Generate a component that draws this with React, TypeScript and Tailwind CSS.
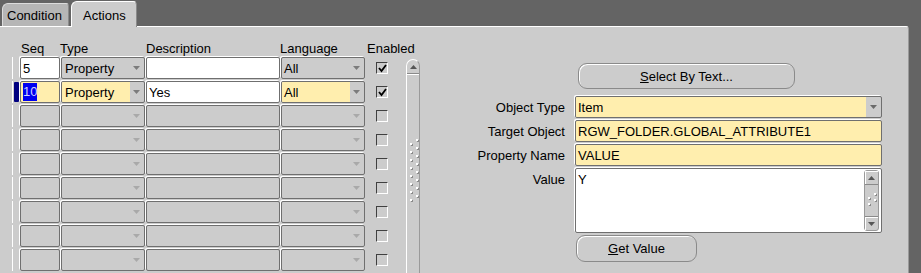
import React from "react";

const FONT = "font-['Liberation_Sans',Arial,Helvetica,sans-serif]";

function Arrow({ color = "#7c7c7c" }: { color?: string }) {
  return (
    <svg width="7" height="4" viewBox="0 0 7 4">
      <polygon points="0,0 7,0 3.5,4" fill={color} />
    </svg>
  );
}

function UpArrow({ color = "#404040" }: { color?: string }) {
  return (
    <svg width="7" height="4" viewBox="0 0 7 4">
      <polygon points="0,4 7,4 3.5,0" fill={color} />
    </svg>
  );
}

function Check({ checked }: { checked: boolean }) {
  return (
    <div className="w-[12px] h-[12px] border-t border-l border-t-[#404040] border-l-[#404040] border-b border-r border-b-white border-r-white flex items-center justify-center">
      {checked && (
        <svg width="9" height="9" viewBox="0 0 9 9">
          <polyline points="1,4 3.5,7 8,1" fill="none" stroke="#000" strokeWidth="1.8" />
        </svg>
      )}
    </div>
  );
}

const fieldBase =
  "h-[22px] border border-[#6f6f6f] rounded-[2px] shadow-[-1px_-1px_0_#ffffff] overflow-hidden flex items-center";

type Row = {
  seq: string;
  seqBg: string;
  seqSel?: boolean;
  type: string;
  typeBg: string;
  desc: string;
  descBg: string;
  lang: string;
  langBg: string;
  checked: boolean;
  current: boolean;
  active: boolean;
};

const rows: Row[] = [
  {
    seq: "5",
    seqBg: "bg-white",
    type: "Property",
    typeBg: "bg-transparent",
    desc: "",
    descBg: "bg-white",
    lang: "All",
    langBg: "bg-transparent",
    checked: true,
    current: false,
    active: true,
  },
  {
    seq: "10",
    seqBg: "bg-[#ffeeae]",
    seqSel: true,
    type: "Property",
    typeBg: "bg-[#ffeeae]",
    desc: "Yes",
    descBg: "bg-white",
    lang: "All",
    langBg: "bg-[#ffeeae]",
    checked: true,
    current: true,
    active: true,
  },
  ...Array.from({ length: 7 }).map(() => ({
    seq: "",
    seqBg: "bg-transparent",
    type: "",
    typeBg: "bg-transparent",
    desc: "",
    descBg: "bg-transparent",
    lang: "",
    langBg: "bg-transparent",
    checked: false,
    current: false,
    active: false,
  })),
];

function GripDots({ count, wide }: { count: number; wide?: boolean }) {
  return (
    <div className={`flex flex-col ${wide ? "gap-[6px]" : "gap-[4px]"}`}>
      {Array.from({ length: count }).map((_, i) => (
        <div key={i} className="flex gap-[4px]">
          <div className="w-[2px] h-[2px] bg-white shadow-[1px_1px_0_#8a8a8a]" />
          <div className="w-[2px] h-[2px] bg-white shadow-[1px_1px_0_#8a8a8a] -mt-[4px]" />
        </div>
      ))}
    </div>
  );
}

function GridRow({ r }: { r: Row }) {
  const arrowColor = r.active ? "#7c7c7c" : "#a9a9a9";
  return (
    <div className="flex items-start h-[22px] mb-[2px]">
      <div className="w-[8px] h-[22px] border-l border-l-white flex items-stretch pl-[1px] pr-[1px] py-[1px]">
        {r.current && <div className="w-[5px] h-[20px] bg-[#000080] rounded-[1px]" />}
      </div>
      <div className={`${fieldBase} w-[40px] ${r.seqBg} pl-[2px]`}>
        {r.seqSel ? (
          <span className="bg-[#0000f0] text-[#d0d0ff] leading-[18px]">{r.seq}</span>
        ) : (
          <span>{r.seq}</span>
        )}
      </div>
      <div className={`${fieldBase} w-[84px] ml-[1px]`}>
        <div className={`flex-1 h-full ${r.typeBg} pl-[3px] flex items-center`}>{r.type}</div>
        <div className="w-[14px] h-full flex items-center justify-center pr-[1px]">
          <Arrow color={arrowColor} />
        </div>
      </div>
      <div className={`${fieldBase} w-[134px] ml-[1px] ${r.descBg} pl-[2px]`}>{r.desc}</div>
      <div className={`${fieldBase} w-[84px] ml-[1px]`}>
        <div className={`flex-1 h-full ${r.langBg} pl-[2px] flex items-center`}>{r.lang}</div>
        <div className="w-[14px] h-full flex items-center justify-center pr-[1px]">
          <Arrow color={arrowColor} />
        </div>
      </div>
      <div className="ml-[11px] mt-[5px]">
        <Check checked={r.checked} />
      </div>
    </div>
  );
}

function Label({ text }: { text: string }) {
  return <div className="w-[125px] h-[22px] flex justify-end items-center">{text}</div>;
}

export default function App() {
  return (
    <div
      className={`${FONT} text-[13px] leading-[15px] text-black w-[921px] h-[273px] bg-[#646464] overflow-hidden flex flex-col`}
    >
      {/* Tabs */}
      <div className="h-[26px] flex items-end shrink-0">
        <div className="ml-[2px] w-[67px] h-[23px] bg-[#b6b6b6] rounded-tl-[6px] rounded-tr-[3px] border-t border-l border-t-[#dcdcdc] border-l-[#dcdcdc] border-r border-r-[#8a8a8a] pl-[4px] pt-[4px]">
          Condition
        </div>
        <div className="relative z-10 -mb-[1px] ml-[2px] w-[66px] h-[26px] bg-[#cccccc] rounded-tl-[6px] rounded-tr-[4px] border-t border-l border-t-white border-l-white border-r border-r-[#8a8a8a] pl-[11px] pt-[6px]">
          Actions
        </div>
      </div>

      {/* Panel */}
      <div className="w-[909px] h-[247px] bg-[#cccccc] border-t border-t-white border-r border-r-[#9a9a9a] rounded-tr-[3px] flex shrink-0 overflow-hidden">
        {/* Left block */}
        <div className="pl-[12px] pt-[14px] flex shrink-0">
          <div className="w-[376px] shrink-0 flex flex-col">
            <div className="h-[18px] flex">
              <div className="w-[9px] shrink-0" />
              <div className="w-[39px] shrink-0">Seq</div>
              <div className="w-[86px] shrink-0">Type</div>
              <div className="w-[134px] shrink-0">Description</div>
              <div className="w-[87px] shrink-0">Language</div>
              <div className="w-0 whitespace-nowrap">Enabled</div>
            </div>
            {rows.map((r, i) => (
              <GridRow key={i} r={r} />
            ))}
          </div>
          {/* scrollbar */}
          <div className="ml-[18px] mt-[18px] w-[14px] h-[240px] shrink-0 bg-[#cccccc] border-l border-t border-l-white border-t-white border-r border-r-[#9a9a9a] rounded-t-[7px] flex flex-col">
            <div className="h-[14px] border-b border-b-[#8a8a8a] shadow-[0_1px_0_#ffffff] flex items-center justify-center">
              <UpArrow color="#555555" />
            </div>
            <div className="flex-1 flex flex-col items-center pt-[69px] pl-[1px]">
              <GripDots count={8} wide />
            </div>
          </div>
        </div>

        {/* Right block */}
        <div className="ml-[20px] pt-[36px] flex flex-col shrink-0">
          <div className="flex">
            <div className="w-[125px]" />
            <div className="ml-[10px] w-[307px]">
              <div className="ml-[3px] w-[217px] h-[26px] rounded-[9px] border border-[#8a8a8a] shadow-[inset_1px_1px_0_#ffffff] flex items-center justify-center">
                <span>
                  <span className="underline">S</span>elect By Text...
                </span>
              </div>
            </div>
          </div>

          <div className="flex mt-[7px]">
            <Label text="Object Type" />
            <div className={`${fieldBase} ml-[10px] w-[307px]`}>
              <div className="flex-1 h-full bg-[#ffeeae] pl-[2px] flex items-center">Item</div>
              <div className="w-[15px] h-full flex items-center justify-center">
                <Arrow color="#6a6a6a" />
              </div>
            </div>
          </div>

          <div className="flex mt-[2px]">
            <Label text="Target Object" />
            <div className={`${fieldBase} ml-[10px] w-[307px] bg-[#ffeeae] pl-[2px]`}>
              RGW_FOLDER.GLOBAL_ATTRIBUTE1
            </div>
          </div>

          <div className="flex mt-[2px]">
            <Label text="Property Name" />
            <div className={`${fieldBase} ml-[10px] w-[307px] bg-[#ffeeae] pl-[2px]`}>VALUE</div>
          </div>

          <div className="flex mt-[2px]">
            <Label text="Value" />
            <div className="ml-[10px] w-[307px] h-[65px] border border-[#6f6f6f] rounded-[2px] shadow-[-1px_-1px_0_#ffffff] bg-white flex">
              <div className="flex-1 pl-[2px] pt-[3px]">Y</div>
              <div className="w-[15px] mr-[2px] my-[1px] bg-[#cccccc] border border-[#9a9a9a] rounded-[3px] flex flex-col">
                <div className="h-[14px] border-b border-b-[#8a8a8a] shadow-[inset_1px_1px_0_#ffffff] flex items-center justify-center">
                  <UpArrow color="#555555" />
                </div>
                <div className="flex-1 flex items-center justify-center pl-[1px]">
                  <GripDots count={2} />
                </div>
                <div className="h-[14px] border-t border-t-[#8a8a8a] shadow-[inset_1px_1px_0_#ffffff] flex items-center justify-center">
                  <Arrow color="#555555" />
                </div>
              </div>
            </div>
          </div>

          <div className="flex mt-[2px]">
            <div className="w-[125px]" />
            <div className="ml-[11px] w-[121px] h-[27px] rounded-[9px] border border-[#8a8a8a] shadow-[inset_1px_1px_0_#ffffff] flex items-center justify-center">
              <span>
                <span className="underline">G</span>et Value
              </span>
            </div>
          </div>
        </div>
      </div>
    </div>
  );
}
